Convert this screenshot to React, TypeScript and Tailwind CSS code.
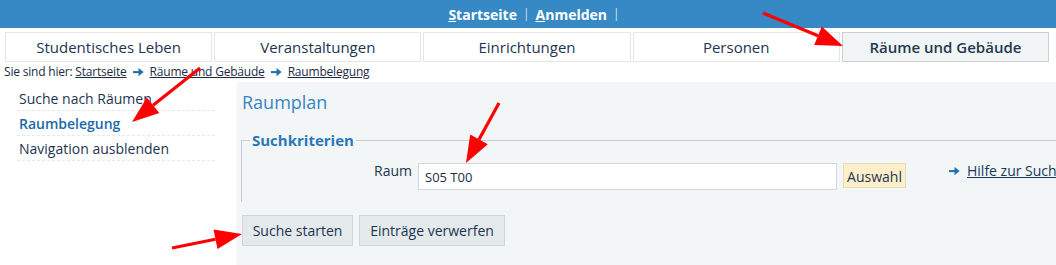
import React from "react";

const FONT = { fontFamily: '"Open Sans", "Noto Sans", sans-serif' };

const tabs = ["Studentisches Leben", "Veranstaltungen", "Einrichtungen", "Personen", "Räume und Gebäude"];
const navItems = [
	{ label: "Suche nach Räumen", active: false },
	{ label: "Raumbelegung", active: true },
	{ label: "Navigation ausblenden", active: false },
];

const SmallArrow: React.FC<{ className?: string }> = ({ className }) => (
	<svg viewBox="0 0 12 10" className={className} fill="currentColor">
		<rect x="0" y="4" width="7" height="2.2" />
		<path d="M6 0.6 L11.6 5.1 L6 9.6 Z" />
	</svg>
);

// red annotation arrows drawn over the screenshot
const annotations = [
	{ from: [763, 13], tip: [843, 46], a: [814.2, 45], b: [821.8, 26.5] },
	{ from: [200, 68], tip: [132, 122], a: [159.3, 113], b: [146.9, 97.4] },
	{ from: [499, 103], tip: [466, 163], a: [487.8, 144.2], b: [470.2, 134.6] },
	{ from: [172, 248], tip: [242, 234], a: [217.5, 249], b: [213.5, 229.5] },
];

const App: React.FC = () => {
	return (
		<div className="relative w-[1056px] h-[265px] overflow-hidden bg-white text-[#1d3550]" style={FONT}>
			<div className="h-[28px] bg-[#3689c4] flex items-center justify-center text-white text-[14px] font-bold gap-[6px] pl-[12px]">
				<span>
					<span className="underline">S</span>tartseite
				</span>
				<span className="font-normal text-[#cfe3f2] text-[12px]">|</span>
				<span>
					<span className="underline">A</span>nmelden
				</span>
				<span className="font-normal text-[#cfe3f2] text-[12px]">|</span>
			</div>

			<div className="flex gap-[2px] pl-[5px] pr-[7px] pt-[4px]">
				{tabs.map((t, i) => {
					const active = i === tabs.length - 1;
					return (
						<div
							key={t}
							className={
								active
									? "flex-1 h-[30px] flex items-center justify-center border border-[#c9cfd2] bg-[#f1f5f6] text-[15px] font-semibold text-[#26394d]"
									: "flex-1 h-[30px] flex items-center justify-center border border-[#e3e6e8] bg-white text-[15px] text-[#1d3550]"
							}
						>
							{t}
						</div>
					);
				})}
			</div>

			<div className="h-[20px] flex items-center pl-[4px] text-[12px] text-[#1a2d44] tracking-[-0.2px]">
				<span>Sie sind hier:&nbsp;</span>
				<span className="underline">Startseite</span>
				<SmallArrow className="w-[11px] h-[10px] mx-[6px] text-[#1f6fb2]" />
				<span className="underline">Räume und Gebäude</span>
				<SmallArrow className="w-[11px] h-[10px] mx-[6px] text-[#1f6fb2]" />
				<span className="underline">Raumbelegung</span>
			</div>

			<div className="flex">
				<div className="w-[237px] shrink-0 pt-[4px] pl-[17px] pr-[22px]">
					{navItems.map((n) => (
						<div
							key={n.label}
							className={
								n.active
									? "h-[25px] flex items-center pl-[2px] border-b border-dashed border-[#e6e9eb] text-[14px] font-semibold text-[#1a6aa8]"
									: "h-[25px] flex items-center pl-[2px] border-b border-dashed border-[#e6e9eb] text-[14px] text-[#1d3550]"
							}
						>
							{n.label}
						</div>
					))}
				</div>

				<div className="flex-1 bg-[#f2f6f7] pl-[4px] pt-[8px] pb-[40px] min-w-[900px]">
					<div className="text-[18px] leading-[24px] text-[#3a84c2] pl-[1px]">Raumplan</div>

					<fieldset className="mt-[16px] border-t border-l border-[#c8cdd0] pl-[8px] pb-[12px] w-[900px]">
						<legend className="px-[2px] text-[15px] leading-[20px] font-bold text-[#2a78b9]">Suchkriterien</legend>
						<div className="flex items-start pt-[13px] -ml-[8px]">
							<label className="w-[170px] text-right text-[14px] leading-[16px] text-[#1d3550]">Raum</label>
							<div className="ml-[6px] w-[419px] h-[27px] bg-white border border-[#d3d7da] flex items-center pl-[6px] text-[13px] text-[#1a2d44] pt-[2px]">
								S05 T00
							</div>
							<div className="ml-[6px] w-[63px] h-[25px] bg-[#fdefcc] border border-[#eadcb6] flex items-center justify-center text-[14px] text-[#1d3550] pt-[1px]">
								Auswahl
							</div>
							<div className="ml-[43px] flex items-center text-[14px] leading-[16px] text-[#1a3a5c]">
								<SmallArrow className="w-[11px] h-[10px] mr-[7px] text-[#1f6fb2]" />
								<span className="underline whitespace-nowrap">Hilfe zur Suche</span>
							</div>
						</div>
					</fieldset>

					<div className="flex gap-[6px] mt-[13px] pl-[1px]">
						<button className="h-[31px] w-[111px] bg-[#e4e9ec] border border-[#d0d6da] text-[14px] text-[#1d3550]">
							Suche starten
						</button>
						<button className="h-[31px] w-[146px] bg-[#e4e9ec] border border-[#d0d6da] text-[14px] text-[#1d3550]">
							Einträge verwerfen
						</button>
					</div>
				</div>
			</div>

			<svg className="absolute inset-0 pointer-events-none" width="1056" height="265">
				{annotations.map((a, i) => (
					<g key={i}>
						<line x1={a.from[0]} y1={a.from[1]} x2={(a.a[0] + a.b[0]) / 2} y2={(a.a[1] + a.b[1]) / 2} stroke="#ff0000" strokeWidth="3.2" />
						<polygon points={`${a.tip[0]},${a.tip[1]} ${a.a[0]},${a.a[1]} ${a.b[0]},${a.b[1]}`} fill="#ff0000" />
					</g>
				))}
			</svg>
		</div>
	);
};

export default App;
